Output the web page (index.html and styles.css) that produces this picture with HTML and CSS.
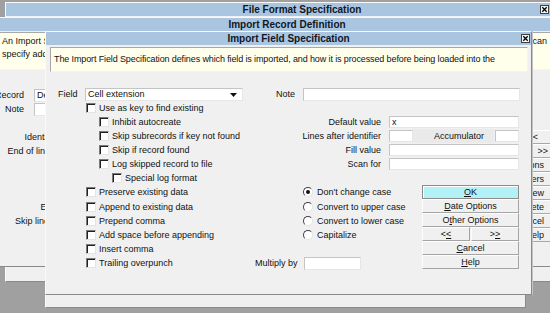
FILE: index.html
```html
<!DOCTYPE html>
<html lang="en">
  <head>
    <meta charset="UTF-8" />
    <title>Import Field Specification</title>
    <link rel="stylesheet" href="styles.css">
  </head>
  <body>
    <div class="desk">
      <div class="win w1">
        <div class="title">
          File Format Specification
          <svg class="close" width="9" height="9" viewBox="0 0 9 9"><rect x="0.5" y="0.5" width="8" height="8" fill="#f4f4f4" stroke="#404040"/><path d="M2.3 2.3l4.4 4.4M6.7 2.3l-4.4 4.4" stroke="#000" stroke-width="1.3"/></svg>
        </div>
      </div>

      <div class="win w2">
        <div class="title">Import Record Definition</div>
        <div class="desc desc2">
          <div class="desc-line"><span>An Import Specification defines how each record is read. You</span><span>can</span></div>
          <div>specify additional fields.</div>
        </div>
        <div class="body2">
          <div class="rec-form">
            <div class="row"><span class="lbl-short">Record</span><span class="input rec-in">Detail</span></div>
            <div class="row"><span class="lbl-short">Note</span><span class="input rec-in"></span></div>
            <div class="row"></div>
            <div class="row"><span class="lbl-long">Identifier</span></div>
            <div class="row"><span class="lbl-long">End of line is</span></div>
            <div class="row"></div>
            <div class="row"></div>
            <div class="row"></div>
            <div class="row"><span class="lbl-long">EOF</span></div>
            <div class="row"><span class="lbl-long">Skip line at</span></div>
          </div>
          <div class="side-buttons">
            <div class="sbtn prev">&lt;&lt;</div>
            <div class="sbtn next">&gt;&gt;</div>
            <div class="sbtn">Options</div>
            <div class="sbtn">Headers</div>
            <div class="sbtn">New</div>
            <div class="sbtn">Delete</div>
            <div class="sbtn">Cancel</div>
            <div class="sbtn">Help</div>
          </div>
        </div>
      </div>

      <div class="win w4"></div>

      <div class="win w3">
        <div class="title">
          Import Field Specification
          <svg class="close" width="9" height="9" viewBox="0 0 9 9"><rect x="0.5" y="0.5" width="8" height="8" fill="#f4f4f4" stroke="#404040"/><path d="M2.3 2.3l4.4 4.4M6.7 2.3l-4.4 4.4" stroke="#000" stroke-width="1.3"/></svg>
        </div>
        <div class="desc desc3">The Import Field Specification defines which field is imported, and how it is processed before being loaded into the</div>

        <div class="form3">
          <div class="col-a">
            <div class="row">
              <span class="lbl-field">Field</span>
              <div class="select">
                Cell extension
                <svg class="arrow" width="7" height="4" viewBox="0 0 7 4"><path d="M0 0h7L3.5 4z" fill="#111"/></svg>
              </div>
            </div>
            <div class="checks">
              <div class="chk"><span class="box"></span>Use as key to find existing</div>
              <div class="chk l1"><span class="box"></span>Inhibit autocreate</div>
              <div class="chk l1"><span class="box"></span>Skip subrecords if key not found</div>
              <div class="chk l1"><span class="box"></span>Skip if record found</div>
              <div class="chk l1"><span class="box"></span>Log skipped record to file</div>
              <div class="chk l2"><span class="box"></span>Special log format</div>
              <div class="chk"><span class="box"></span>Preserve existing data</div>
              <div class="chk gap"><span class="box"></span>Append to existing data</div>
              <div class="chk"><span class="box"></span>Prepend comma</div>
              <div class="chk"><span class="box"></span>Add space before appending</div>
              <div class="chk"><span class="box"></span>Insert comma</div>
              <div class="chk"><span class="box"></span>Trailing overpunch</div>
            </div>
          </div>

          <div class="col-b">
            <div class="row"><span class="lbl-note">Note</span><span class="input note-in"></span></div>
            <div class="row"></div>
            <div class="row"><span class="lbl-r">Default value</span><span class="input wide">x</span></div>
            <div class="row">
              <span class="lbl-r">Lines after identifier</span>
              <span class="input tiny"></span>
              <span class="acc">Accumulator</span>
              <span class="input tiny2"></span>
            </div>
            <div class="row"><span class="lbl-r">Fill value</span><span class="input wide"></span></div>
            <div class="row"><span class="lbl-r">Scan for</span><span class="input wide"></span></div>

            <div class="lower">
              <div class="lower-left">
                <div class="row"></div>
                <div class="rad"><span class="radio on"></span>Don't change case</div>
                <div class="rad gap"><span class="radio"></span>Convert to upper case</div>
                <div class="rad"><span class="radio"></span>Convert to lower case</div>
                <div class="rad"><span class="radio"></span>Capitalize</div>
                <div class="row"></div>
                <div class="row"><span class="lbl-mult">Multiply by</span><span class="input mult"></span></div>
              </div>
              <div class="buttons">
                <div class="btn ok"><u>O</u>K</div>
                <div class="btn"><u>D</u>ate Options</div>
                <div class="btn">O<u>t</u>her Options</div>
                <div class="btn-pair">
                  <div class="btn">&lt;<u>&lt;</u></div>
                  <div class="btn">&gt;<u>&gt;</u></div>
                </div>
                <div class="btn"><u>C</u>ancel</div>
                <div class="btn"><u>H</u>elp</div>
              </div>
            </div>
          </div>
        </div>
      </div>
    </div>
  </body>
</html>
```

FILE: styles.css
```css
* {
  box-sizing: border-box;
}
body {
  margin: 0;
  font-family: "Liberation Sans", Arial, sans-serif;
  font-size: 9px;
  color: #111;
}
.desk {
  position: relative;
  width: 550px;
  height: 313px;
  overflow: hidden;
  background: #a0a0a0;
}

/* windows */
.win {
  position: absolute;
  background: #f0f0f0;
  border: 1px solid;
  border-color: #fafafa #8a8a8a #8a8a8a #fafafa;
}
.title {
  position: relative;
  height: 13px;
  line-height: 13px;
  background: #aac5df;
  font-size: 10px;
  font-weight: bold;
  color: #0f1726;
  text-align: center;
  white-space: nowrap;
}
.close {
  position: absolute;
  top: 2px;
  right: 1px;
}
.w1 {
  left: 5px;
  top: 2px;
  width: 560px;
  height: 280px;
}
.w1 .title {
  padding-left: 34px;
}
.w1 .close {
  right: 15px;
}
.w2 {
  left: -10px;
  top: 17px;
  width: 580px;
  height: 250px;
}
.w2 .title {
  padding-left: 14px;
}
.w3 {
  left: 45px;
  top: 31px;
  width: 487px;
  height: 264px;
  box-shadow: 1px 0 0 #c4c4c4;
}
.w4 {
  left: 45px;
  top: 60px;
  width: 481px;
  height: 248px;
}

/* description boxes */
.desc {
  background: #ffffec;
  border: 1px solid;
  border-color: #a8a8a8 #f4f4f4 #f4f4f4 #a8a8a8;
  line-height: 13px;
  white-space: nowrap;
  overflow: hidden;
}
.desc2 {
  height: 38px;
  margin: 1px 1px 0;
  padding: 2px 20px 0 9px;
}
.desc-line {
  display: flex;
  justify-content: space-between;
}
.desc3 {
  height: 25px;
  margin: 2px 3px 0 4px;
  padding: 5px 0 0 3px;
  letter-spacing: -0.12px;
}

/* generic rows and inputs */
.row {
  display: flex;
  align-items: center;
  height: 14px;
  white-space: nowrap;
}
.input {
  display: block;
  height: 12px;
  line-height: 10px;
  padding-left: 2px;
  background: #fff;
  border: 1px solid;
  border-color: #c4c4c4 #e6e6e6 #e6e6e6 #c4c4c4;
  overflow: hidden;
}

/* record definition window */
.body2 {
  display: flex;
  margin-top: 18px;
}
.rec-form {
  width: 480px;
}
.lbl-short {
  width: 33px;
  text-align: right;
  margin-right: 10px;
}
.rec-in {
  width: 120px;
  height: 13px;
}
.lbl-long {
  width: 68px;
  text-align: right;
}
.side-buttons {
  width: 100px;
  margin-top: 42px;
}
.sbtn {
  height: 14px;
  line-height: 12px;
  text-align: right;
  padding-right: 24px;
  border: 1px solid;
  border-color: #fff #a8a8a8 #a8a8a8 #fff;
}
.sbtn.prev {
  padding-right: 30px;
}
.sbtn.next {
  padding-right: 20px;
}

/* field specification window */
.form3 {
  display: flex;
  margin-top: 15px;
  padding-left: 12px;
}
.col-a {
  width: 197px;
}
.lbl-field {
  width: 27px;
}
.select {
  position: relative;
  width: 158px;
  height: 13px;
  line-height: 11px;
  padding-left: 2px;
  background: #fff;
  border: 1px solid;
  border-color: #c4c4c4 #e6e6e6 #e6e6e6 #c4c4c4;
}
.arrow {
  position: absolute;
  right: 5px;
  top: 4px;
}
.checks {
  margin-left: 28px;
}
.chk {
  display: flex;
  align-items: center;
  height: 14px;
  white-space: nowrap;
}
.chk.l1 {
  padding-left: 13px;
}
.chk.l2 {
  padding-left: 26px;
}
.chk.gap,
.rad.gap {
  margin-top: 1px;
}
.box {
  width: 10px;
  height: 10px;
  margin-right: 3px;
  background: #fff;
  border: 1px solid;
  border-color: #7a7a7a #e4e4e4 #e4e4e4 #7a7a7a;
  box-shadow: inset 1px 1px 0 #202020;
}

.col-b {
  width: 265px;
}
.lbl-note {
  width: 48px;
  padding-left: 21px;
}
.note-in {
  width: 217px;
  height: 13px;
}
.lbl-r {
  width: 126px;
  margin-right: 8px;
  text-align: right;
}
.wide {
  width: 130px;
}
.tiny {
  width: 24px;
}
.acc {
  width: 81px;
  height: 14px;
  line-height: 14px;
  text-align: right;
  padding-right: 10px;
  background: #eaeaea;
}
.tiny2 {
  width: 24px;
  margin-left: 1px;
}

.lower {
  display: flex;
}
.lower-left {
  width: 167px;
}
.rad {
  display: flex;
  align-items: center;
  height: 14px;
  padding-left: 48px;
  white-space: nowrap;
}
.radio {
  position: relative;
  width: 10px;
  height: 10px;
  margin-right: 4px;
  border-radius: 50%;
  background: #fff;
  border: 1px solid;
  border-color: #404040 #e4e4e4 #e4e4e4 #404040;
}
.radio.on::after {
  content: "";
  position: absolute;
  left: 2px;
  top: 2px;
  width: 4px;
  height: 4px;
  border-radius: 50%;
  background: #111;
}
.lbl-mult {
  width: 49px;
}
.mult {
  width: 57px;
  height: 13px;
}

.buttons {
  width: 97px;
  margin-top: 14px;
}
.btn {
  height: 14px;
  line-height: 12px;
  text-align: center;
  background: #f0f0f0;
  border: 1px solid;
  border-color: #fdfdfd #a4a4a4 #a4a4a4 #fdfdfd;
}
.btn.ok {
  background: #b2f1f6;
  border-color: #8c8c8c;
  box-shadow: inset 1px 1px 0 #fff;
}
.btn-pair {
  display: flex;
  gap: 1px;
}
.btn-pair .btn {
  flex: 1;
}
```
